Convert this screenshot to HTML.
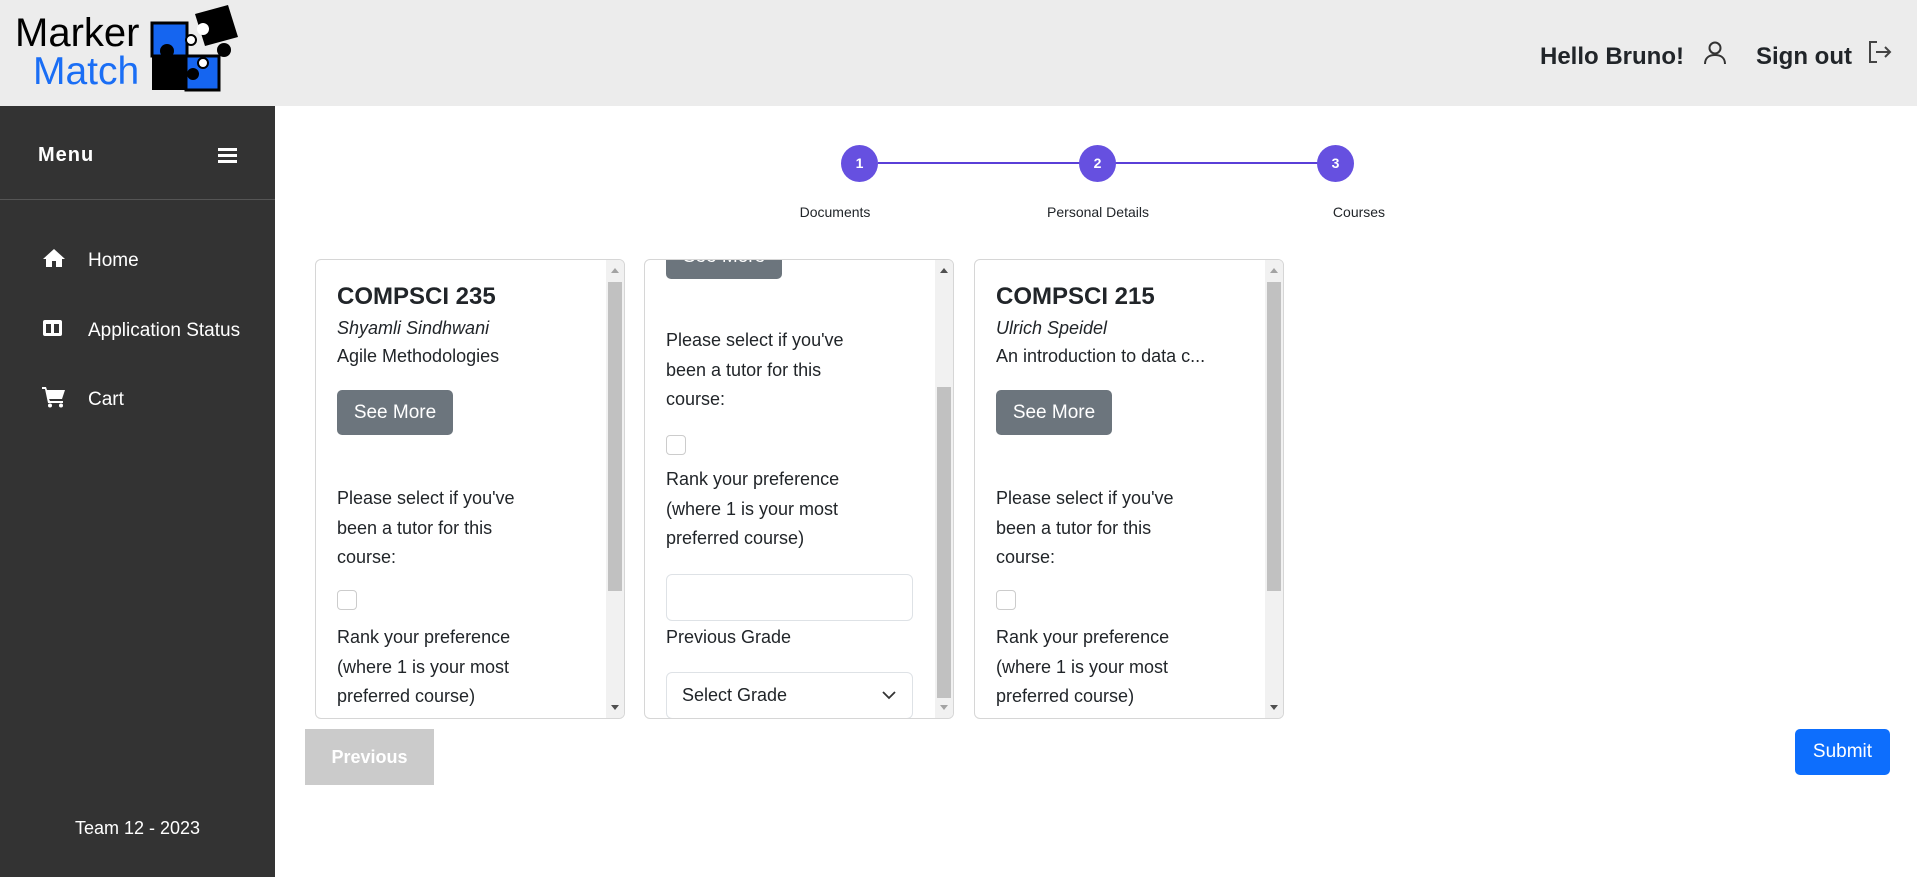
<!DOCTYPE html>
<html><head><meta charset="utf-8"><style>
*{box-sizing:border-box;margin:0;padding:0}
body{width:1917px;height:877px;overflow:hidden;background:#fff;font-family:"Liberation Sans",sans-serif;color:#212529;position:relative}
.abs{position:absolute}
header{position:absolute;left:0;top:0;width:1917px;height:106px;background:#ececec}
aside{position:absolute;left:0;top:106px;width:275px;height:771px;background:#333;color:#fff}
.card{position:absolute;top:259px;width:310px;height:460px;border:1px solid #d6d6d6;border-radius:6px;overflow:hidden;background:#fff;font-size:18px}
.card .t{position:absolute;left:21px;line-height:29.5px;white-space:nowrap}
.btn{position:absolute;left:21px;width:116px;height:45px;background:#6c757d;color:#fff;border-radius:5px;font-size:19px;text-align:center;line-height:45px}
.cb{position:absolute;left:21px;width:20px;height:20px;border:1px solid #ccc;border-radius:4px}
.sb{position:absolute;right:0;top:0;width:18px;height:100%;background:#f1f1f1}
.th{position:absolute;left:2px;width:14px;background:#c1c1c1}
.up,.dn{position:absolute;left:5px;width:0;height:0;border-left:4px solid transparent;border-right:4px solid transparent}
.up{top:8px;border-bottom:5px solid #a3a3a3}
.dn{bottom:8px;border-top:5px solid #505050}
.step{position:absolute;top:145px;width:37px;height:37px;border-radius:50%;background:#6650e0;color:#fff;font-size:14px;font-weight:bold;text-align:center;line-height:37px}
.lbl{position:absolute;top:204px;font-size:14px;width:200px;text-align:center}
</style></head><body>
<header>
  <div class="abs" style="left:15px;top:12px;font-size:40px;line-height:42px;color:#000">Marker</div>
  <div class="abs" style="left:33px;top:52px;font-size:39px;line-height:40px;color:#1a6ef5">Match</div>
  <svg class="abs" style="left:148px;top:2px" width="95" height="94" viewBox="148 2 95 94">
    <rect x="152" y="23" width="35" height="33" fill="#1565f0" stroke="#000" stroke-width="3"/>
    <rect x="186" y="56" width="33" height="34" fill="#1565f0" stroke="#000" stroke-width="3"/>
    <rect x="152" y="55" width="35" height="35" fill="#000"/>
    <circle cx="167" cy="51" r="7" fill="#000"/>
    <circle cx="193" cy="74" r="6" fill="#000"/>
    <circle cx="191" cy="40" r="5" fill="#fff" stroke="#000" stroke-width="2"/>
    <circle cx="203" cy="63" r="5" fill="#fff" stroke="#000" stroke-width="2"/>
    <polygon points="195,14 228,5 238,37 205,46" fill="#000"/>
    <circle cx="224" cy="50" r="7" fill="#000"/>
    <circle cx="203" cy="29" r="6" fill="#fff"/>
  </svg>
  <div class="abs" style="left:1540px;top:42px;font-size:24px;font-weight:bold;line-height:30px">Hello Bruno!</div>
  <svg class="abs" style="left:1703px;top:40px" width="24" height="26" viewBox="0 0 24 26" fill="none" stroke="#333" stroke-width="2"><circle cx="12" cy="8" r="5.5"/><path d="M2 24c0-6 4-9 10-9s10 3 10 9"/></svg>
  <div class="abs" style="left:1756px;top:42px;font-size:24px;font-weight:bold;line-height:30px">Sign out</div>
  <svg class="abs" style="left:1868px;top:40px" width="24" height="24" viewBox="0 0 24 24" fill="none" stroke="#444" stroke-width="2"><path d="M9 2H2v20h7M8 12h14M17 7l5 5-5 5"/></svg>
</header>
<aside>
  <div class="abs" style="left:38px;top:38px;font-size:20px;font-weight:bold;letter-spacing:1px">Menu</div>
  <div class="abs" style="left:218px;top:42px;width:19px;height:3px;background:#fff;box-shadow:0 6px 0 #fff,0 12px 0 #fff"></div>
  <div class="abs" style="left:0;top:93px;width:275px;height:1px;background:#555"></div>
  <svg class="abs" style="left:42px;top:142px" width="24" height="20" viewBox="0 0 24 20" fill="#fff"><path d="M12 1L1 11h3v8h6v-6h4v6h6v-8h3z"/></svg>
  <div class="abs" style="left:88px;top:144px;font-size:19px">Home</div>
  <svg class="abs" style="left:42px;top:213px" width="21" height="18" viewBox="0 0 21 18"><rect x="1" y="1" width="19" height="16" rx="2" fill="#fff"/><rect x="4" y="5" width="5" height="9" fill="#333"/><rect x="12" y="5" width="5" height="9" fill="#333"/></svg>
  <div class="abs" style="left:88px;top:214px;font-size:19px">Application Status</div>
  <svg class="abs" style="left:42px;top:280px" width="24" height="22" viewBox="0 0 24 22" fill="#fff"><path d="M0 1h4l1 3h18l-3 9H7l1 2h13v2H6L3 3H0z"/><circle cx="8" cy="19.5" r="2"/><circle cx="19" cy="19.5" r="2"/></svg>
  <div class="abs" style="left:88px;top:283px;font-size:19px">Cart</div>
  <div class="abs" style="left:0;top:712px;width:275px;text-align:center;font-size:18px">Team 12 - 2023</div>
</aside>
<div class="abs" style="left:878px;top:162px;width:457px;height:2px;background:#5a3fd8"></div>
<div class="step" style="left:841px">1</div>
<div class="step" style="left:1079px">2</div>
<div class="step" style="left:1317px">3</div>
<div class="lbl" style="left:735px">Documents</div>
<div class="lbl" style="left:998px">Personal Details</div>
<div class="lbl" style="left:1259px">Courses</div>

<div class="card" style="left:315px">
  <div class="t" style="top:22px;font-size:24px;font-weight:bold">COMPSCI 235</div>
  <div class="t" style="top:54px;font-style:italic">Shyamli Sindhwani</div>
  <div class="t" style="top:82px">Agile Methodologies</div>
  <div class="btn" style="top:130px">See More</div>
  <div class="t" style="top:224px">Please select if you've<br>been a tutor for this<br>course:</div>
  <div class="cb" style="top:330px"></div>
  <div class="t" style="top:363px">Rank your preference<br>(where 1 is your most<br>preferred course)</div>
  <div class="sb"><div class="up"></div><div class="th" style="top:22px;height:309px"></div><div class="dn"></div></div>
</div>
<div class="card" style="left:644px">
  <div class="btn" style="top:-26px">See More</div>
  <div class="t" style="top:66px">Please select if you've<br>been a tutor for this<br>course:</div>
  <div class="cb" style="top:175px"></div>
  <div class="t" style="top:205px">Rank your preference<br>(where 1 is your most<br>preferred course)</div>
  <div class="abs" style="left:21px;top:314px;width:247px;height:47px;border:1px solid #dee2e6;border-radius:6px"></div>
  <div class="t" style="top:363px">Previous Grade</div>
  <div class="abs" style="left:21px;top:412px;width:247px;height:47px;border:1px solid #dee2e6;border-radius:6px;font-size:18px;line-height:45px;padding-left:15px">Select Grade
    <svg class="abs" style="right:16px;top:17px" width="14" height="10" viewBox="0 0 14 10" fill="none" stroke="#333" stroke-width="1.8"><path d="M1 2l6 6 6-6"/></svg></div>
  <div class="sb"><div class="up" style="border-bottom-color:#505050"></div><div class="th" style="top:127px;height:311px"></div><div class="dn" style="border-top-color:#a3a3a3"></div></div>
</div>
<div class="card" style="left:974px">
  <div class="t" style="top:22px;font-size:24px;font-weight:bold">COMPSCI 215</div>
  <div class="t" style="top:54px;font-style:italic">Ulrich Speidel</div>
  <div class="t" style="top:82px">An introduction to data c...</div>
  <div class="btn" style="top:130px">See More</div>
  <div class="t" style="top:224px">Please select if you've<br>been a tutor for this<br>course:</div>
  <div class="cb" style="top:330px"></div>
  <div class="t" style="top:363px">Rank your preference<br>(where 1 is your most<br>preferred course)</div>
  <div class="sb"><div class="up"></div><div class="th" style="top:22px;height:309px"></div><div class="dn"></div></div>
</div>
<div class="abs" style="left:305px;top:729px;width:129px;height:56px;background:#cbcbcb;color:#fff;font-weight:bold;font-size:18px;text-align:center;line-height:56px">Previous</div>
<div class="abs" style="left:1795px;top:729px;width:95px;height:46px;background:#0d6efd;color:#fff;font-size:19px;text-align:center;line-height:46px;border-radius:5px">Submit</div>
</body></html>
